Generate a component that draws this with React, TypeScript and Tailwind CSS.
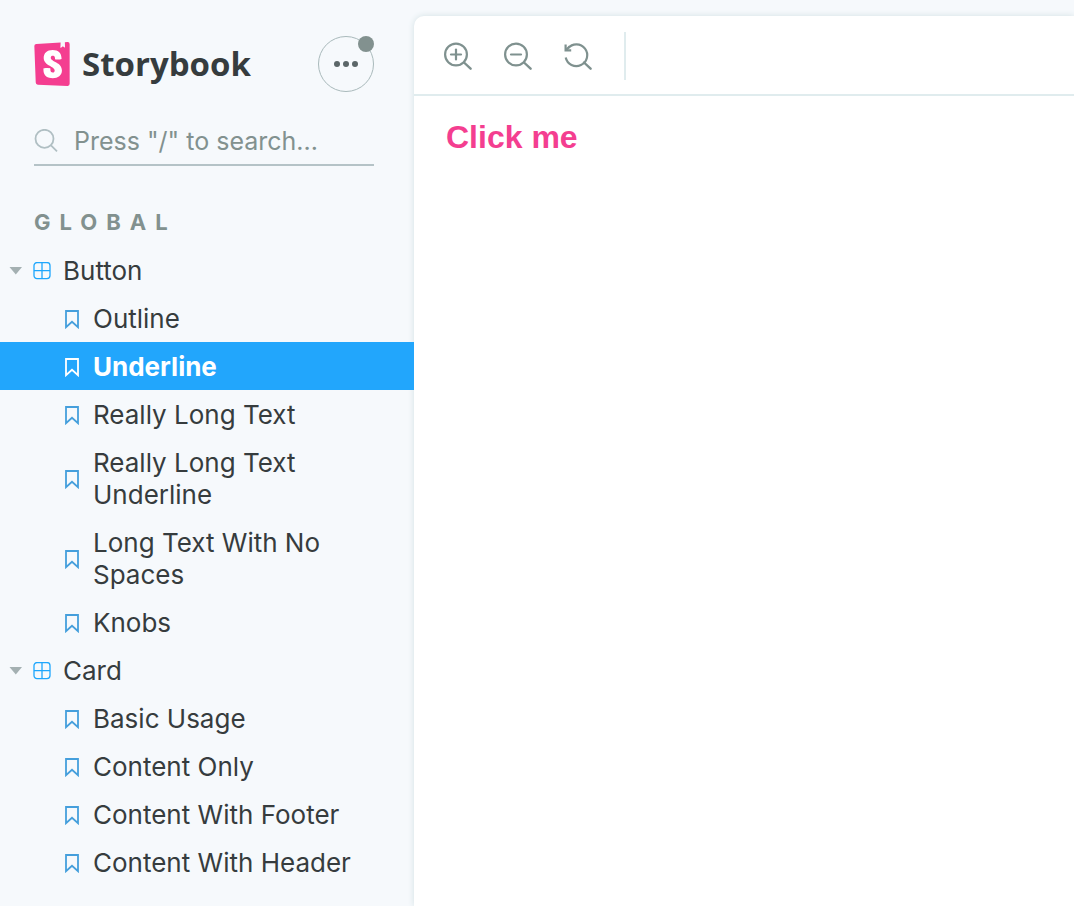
import { SiStorybook } from "react-icons/si";

const groups = [
  {
    name: "Button",
    stories: [
      "Outline",
      "Underline",
      "Really Long Text",
      "Really Long Text Underline",
      "Long Text With No Spaces",
      "Knobs",
    ],
  },
  {
    name: "Card",
    stories: ["Basic Usage", "Content Only", "Content With Footer", "Content With Header"],
  },
];

function Logo() {
  return (
    <a href="#home" className="flex items-center gap-2" aria-label="Storybook">
      <span className="relative block size-11">
        <span className="absolute inset-x-2.5 top-1 bottom-2 bg-white" />
        <SiStorybook className="relative size-11 text-[#f43e90]" />
      </span>
      <span className="font-['Open_Sans',sans-serif] text-[33px] leading-11 font-bold text-[#363c3e]">
        Storybook
      </span>
    </a>
  );
}

function ComponentIcon() {
  return (
    <svg viewBox="0 0 18 18" className="size-[18px] shrink-0" fill="none" stroke="#1ea7fd" strokeWidth="1.3">
      <rect x="1" y="0.6" width="16" height="16" rx="3" />
      <path d="M9 0.6v16M1 8.6h16" />
    </svg>
  );
}

function BookmarkIcon({ selected }: { selected: boolean }) {
  return (
    <svg
      viewBox="0 0 14 19"
      className={selected ? "h-[19px] w-3.5 shrink-0 text-white" : "h-[19px] w-3.5 shrink-0 text-[#459fdc]"}
      fill="none"
      stroke="currentColor"
      strokeWidth="1.8"
    >
      <path d="M1 1h12v16.2l-6-5.4-6 5.4z" />
    </svg>
  );
}

function ZoomIcon({ kind }: { kind: "in" | "out" | "reset" }) {
  return (
    <svg viewBox="0 -1 28 28" className="size-7" fill="none" stroke="#7f918f" strokeWidth="2.2">
      <path d="M20 19.5l6.6 6.2" strokeWidth="2.4" strokeLinecap="round" />
      {kind === "reset" ? (
        <>
          <path d="M1.7 14.5A10.9 10.9 0 1 0 4 5.2" />
          <path d="M1.6 1.4v6h5.6" strokeWidth="2.2" />
          <path d="M1.8 7.2l4-4M1.8 5.2l2 2" />
        </>
      ) : (
        <circle cx="12" cy="11.5" r="10.9" />
      )}
      {kind !== "reset" && <path d="M7 11.5h10" strokeLinecap="round" />}
      {kind === "in" && <path d="M12 6.5v10" strokeLinecap="round" />}
    </svg>
  );
}

function StoryTree() {
  return (
    <nav aria-label="Stories" className="text-[26px]">
      {groups.map((group) => (
        <section key={group.name}>
          <button
            type="button"
            aria-expanded="true"
            className="flex w-full items-center pt-[9px] pb-[7px] pl-[9px] text-left"
          >
            <svg viewBox="0 0 14 8" className="h-2 w-3.5" fill="#a4b0b2">
              <path d="M0.5 0h12.5L6.8 7.5z" />
            </svg>
            <span className="ml-2.5 flex items-center gap-3">
              <ComponentIcon />
              <span>{group.name}</span>
            </span>
          </button>
          <ul>
            {group.stories.map((story) => {
              const selected = story === "Underline";
              return (
                <li key={story}>
                  <a
                    href={"#" + story.toLowerCase().replaceAll(" ", "-")}
                    aria-current={selected ? "page" : undefined}
                    className={
                      selected
                        ? "relative z-10 flex items-center gap-3.5 bg-[#22a6fc] pt-[9px] pr-10 pb-[7px] pl-[65px] font-bold text-white"
                        : "flex items-center gap-3.5 pt-[9px] pr-10 pb-[7px] pl-[65px]"
                    }
                  >
                    <BookmarkIcon selected={selected} />
                    <span>{story}</span>
                  </a>
                </li>
              );
            })}
          </ul>
        </section>
      ))}
    </nav>
  );
}

export default function App() {
  return (
    <div className="flex min-h-screen bg-[#f6f9fc] font-['Inter',sans-serif] text-[25px] leading-8 text-[#363c3e]">
      <aside className="w-[414px] shrink-0">
        <header className="flex items-center justify-between pt-9 pr-10 pl-[30px]">
          <Logo />
          <button
            type="button"
            aria-label="Menu"
            className="relative flex size-14 items-center justify-center gap-[3px] rounded-full border border-[#a9b9bb]"
          >
            <span className="size-1.5 rounded-full bg-[#5b6668]" />
            <span className="size-1.5 rounded-full bg-[#5b6668]" />
            <span className="size-1.5 rounded-full bg-[#5b6668]" />
            <span className="absolute -top-px -right-px size-4 rounded-full bg-[#82918f]" />
          </button>
        </header>

        <label className="mt-[25px] mr-10 ml-[34px] flex h-[49px] items-center gap-4 border-b-2 border-[#b5c3c7]">
          <svg viewBox="0 0 24 24" className="size-6 shrink-0" fill="none" stroke="#b0bfc3" strokeWidth="1.8">
            <circle cx="10.5" cy="9.8" r="9" />
            <path d="M17 16.3l6 6" />
          </svg>
          <input
            type="text"
            aria-label="Search"
            placeholder={'Press "/" to search...'}
            className="min-w-0 flex-1 bg-transparent outline-none placeholder:text-[#82918f]"
          />
        </label>

        <h2 className="mt-10 mb-2 pl-[34px] text-[22px] font-bold tracking-[9px] text-[#82918f]">GLOBAL</h2>
        <StoryTree />
      </aside>

      <main className="mt-4 min-w-0 flex-1 rounded-tl-[10px] bg-white shadow-[0_0_6px_#d2e0e3]">
        <div className="flex h-20 items-center gap-8 border-b-2 border-[#e0ecee] pt-0.5 pl-[30px]">
          <button type="button" aria-label="Zoom in">
            <ZoomIcon kind="in" />
          </button>
          <button type="button" aria-label="Zoom out">
            <ZoomIcon kind="out" />
          </button>
          <button type="button" aria-label="Reset zoom">
            <ZoomIcon kind="reset" />
          </button>
          <span className="h-12 w-0.5 bg-[#e0ecee]" />
        </div>
        <div className="px-8 py-[25px]">
          <button
            type="button"
            className="font-['Liberation_Sans',sans-serif] text-[32px] font-bold text-[#f43e90]"
          >
            Click me
          </button>
        </div>
      </main>
    </div>
  );
}
